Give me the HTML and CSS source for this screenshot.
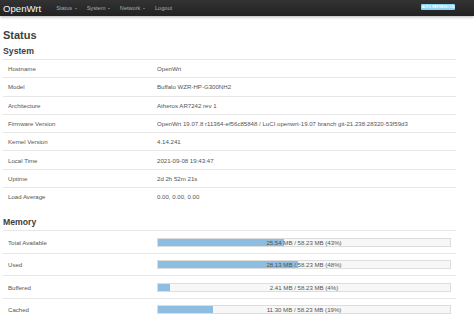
FILE: index.html
```html
<!doctype html>
<html>
    <head>
        <meta charset="UTF-8">
        <title>OpenWrt - Status</title>
        <link rel="stylesheet" href="styles.css">
    </head>
    <body>
        <header class="topbar">
            <a class="brand">OpenWrt</a>
            <ul class="nav">
                <li>Status <span class="caret"></span></li>
                <li>System <span class="caret"></span></li>
                <li>Network <span class="caret"></span></li>
                <li>Logout</li>
            </ul>
            <span class="poll">AUTO REFRESH ON</span>
        </header>
        <div class="main">
            <h2>Status</h2>
            <h3>System</h3>
            <table class="info">
                <tr><td>Hostname</td><td>OpenWrt</td></tr>
                <tr><td>Model</td><td>Buffalo WZR-HP-G300NH2</td></tr>
                <tr><td>Architecture</td><td>Atheros AR7242 rev 1</td></tr>
                <tr><td>Firmware Version</td><td>OpenWrt 19.07.8 r11364-ef56c85848 / LuCI openwrt-19.07 branch git-21.238.28320-53f59d3</td></tr>
                <tr><td>Kernel Version</td><td>4.14.241</td></tr>
                <tr><td>Local Time</td><td>2021-09-08 19:43:47</td></tr>
                <tr><td>Uptime</td><td>2d 2h 52m 21s</td></tr>
                <tr><td>Load Average</td><td>0.00, 0.00, 0.00</td></tr>
            </table>
            <h3 class="mem-title">Memory</h3>
            <table class="info mem">
                <tr><td>Total Available</td><td><div class="bar"><div class="fill" style="width:43%"></div><span>25.54 MB / 58.23 MB (43%)</span></div></td></tr>
                <tr><td>Used</td><td><div class="bar"><div class="fill" style="width:48%"></div><span>28.13 MB / 58.23 MB (48%)</span></div></td></tr>
                <tr><td>Buffered</td><td><div class="bar"><div class="fill" style="width:4%"></div><span>2.41 MB / 58.23 MB (4%)</span></div></td></tr>
                <tr><td>Cached</td><td><div class="bar"><div class="fill" style="width:19%"></div><span>11.30 MB / 58.23 MB (19%)</span></div></td></tr>
            </table>
        </div>
    </body>
</html>
```

FILE: styles.css
```css
*{
    margin: 0;
    padding: 0;
}
body{
    font-family: "Liberation Sans", Arial, sans-serif;
    color: #404040;
    background: #fff;
}
ul{
    list-style: none;
}
.topbar{                              /*顶部导航条*/
    height: 16px;
    display: flex;
    align-items: center;
    padding: 0 3px;
    background: linear-gradient(#333, #222);
    box-shadow: 0 1px 3px rgba(0,0,0,0.3);
}
.brand{
    font-size: 9.6px;
    color: #f5f5f5;
    margin-right: 15px;
}
.nav{
    display: flex;
    gap: 10px;
    flex: 1;
}
.nav li{
    font-size: 5.6px;
    color: #aaa;
}
.caret{
    display: inline-block;
    width: 0;
    height: 0;
    vertical-align: middle;
    border-left: 1.5px solid transparent;
    border-right: 1.5px solid transparent;
    border-top: 1.5px solid #aaa;
    margin-left: 1px;
}
.poll{
    margin-right: 16px;
    margin-top: -3px;
    width: 34px;
    height: 6px;
    line-height: 6px;
    font-size: 3.4px;
    font-weight: bold;
    text-align: center;
    color: #fff;
    background: #8fd3f3;
    border-radius: 1px;
    overflow: hidden;
    white-space: nowrap;
}
.main{
    padding: 0 18px 0 3px;
}
h2{
    font-size: 11px;
    line-height: 13px;
    margin-top: 13px;
    color: #404040;
}
h3{
    font-size: 8.7px;
    line-height: 10px;
    margin-top: 4px;
    margin-bottom: 3px;
    color: #404040;
}
.info{
    width: 100%;
    border-collapse: collapse;
    font-size: 6.1px;
    color: #555;
}
.info td{
    height: 17.3px;
    padding: 0 5px;
    border-top: 1px solid #e6e6e6;
    vertical-align: middle;
    white-space: nowrap;
}
.info td:first-child{
    width: 144px;
}
.info td:last-child{
    padding-left: 0;
}
.mem-title{
    margin-top: 12px;
}
.mem td{
    height: 21.5px;
}
.bar{                                 /*内存进度条*/
    position: relative;
    width: 294px;
    height: 9px;
    background: #f7f7f7;
    border: 1px solid #ddd;
    box-sizing: border-box;
}
.fill{
    height: 100%;
    background: #8dbde0;
}
.bar span{
    position: absolute;
    left: 0;
    right: 0;
    top: 0;
    line-height: 7px;
    text-align: center;
    color: #555;
}
```
